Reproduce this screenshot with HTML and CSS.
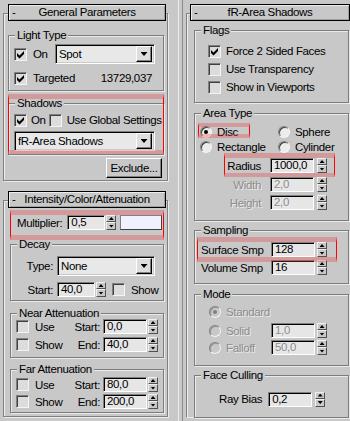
FILE: index.html
```html
<!DOCTYPE html>
<html>
<head>
<meta charset="utf-8">
<link rel="stylesheet" href="styles.css">
</head>
<body>
<div class="col col-left">
  <section class="rollout">
    <div class="roll-head"><span>-</span><span class="ttl">General Parameters</span><span></span></div>
    <div class="roll-body rb1">
      <fieldset class="grp g-light">
        <legend>Light Type</legend>
        <div class="gb gb-light">
          <div class="row r-on"><span class="chk on"><svg width="11" height="11" viewBox="0 0 11 11"><polygon points="2,4 4.5,6.5 9,2 9,5 4.5,9.5 2,7"/></svg></span><span class="lbl">On</span><div class="combo c-spot"><span class="t">Spot</span><span class="cbtn"></span></div></div>
          <div class="row r-tg"><span class="chk on"><svg width="11" height="11" viewBox="0 0 11 11"><polygon points="2,4 4.5,6.5 9,2 9,5 4.5,9.5 2,7"/></svg></span><span class="lbl">Targeted</span><span class="num">13729,037</span></div>
        </div>
      </fieldset>
      <fieldset class="grp g-sh">
        <legend>Shadows</legend>
        <div class="gb gb-sh">
          <div class="row r-sh"><span class="chk on"><svg width="11" height="11" viewBox="0 0 11 11"><polygon points="2,4 4.5,6.5 9,2 9,5 4.5,9.5 2,7"/></svg></span><span class="lbl-4">On</span><span class="chk chk-2"></span><span class="lbl-5">Use Global Settings</span></div>
          <div class="combo c-shadow"><span class="t">fR-Area Shadows</span><span class="cbtn"></span></div>
        </div>
      </fieldset>
      <div class="btn-row"><button class="btn">Exclude...</button></div>
    </div>
  </section>

  <section class="rollout r2">
    <div class="roll-head"><span>-</span><span class="ttl">Intensity/Color/Attenuation</span><span></span></div>
    <div class="roll-body rb2">
      <div class="row r-mult"><span>Multiplier:</span><span class="fld f-mult">0,5</span><span class="spin"><span></span><span></span></span><span class="swatch"></span></div>
      <fieldset class="grp g-decay">
        <legend>Decay</legend>
        <div class="gb gb-decay">
          <div class="row r-type"><span class="rl rl-42">Type:</span><div class="combo c-none"><span class="t">None</span><span class="cbtn"></span></div></div>
          <div class="row r-start"><span class="rl rl-42">Start:</span><span class="fld f-38">40,0</span><span class="spin"><span></span><span></span></span><span class="chk chk-6"></span><span class="lbl">Show</span></div>
        </div>
      </fieldset>
      <fieldset class="grp g-near">
        <legend>Near Attenuation</legend>
        <div class="gb gb-near">
          <div class="row r-att"><span class="chk"></span><span class="lbl w36">Use</span><span class="rl rl-29">Start:</span><span class="fld f-44 ml3">0,0</span><span class="spin"><span></span><span></span></span></div>
          <div class="row r-att r-att2"><span class="chk"></span><span class="lbl w36">Show</span><span class="rl rl-29">End:</span><span class="fld f-44 ml3">40,0</span><span class="spin"><span></span><span></span></span></div>
        </div>
      </fieldset>
      <fieldset class="grp g-far">
        <legend>Far Attenuation</legend>
        <div class="gb gb-far">
          <div class="row r-att"><span class="chk"></span><span class="lbl w36">Use</span><span class="rl rl-29">Start:</span><span class="fld f-44 ml3">80,0</span><span class="spin"><span></span><span></span></span></div>
          <div class="row r-att r-att3"><span class="chk"></span><span class="lbl w36">Show</span><span class="rl rl-29">End:</span><span class="fld f-44 ml3">200,0</span><span class="spin"><span></span><span></span></span></div>
        </div>
      </fieldset>
    </div>
  </section>

  <div class="hl hl-shadows"></div>
  <div class="hl hl-mult"></div>
</div>

<div class="divider"></div>

<div class="col col-right">
  <section class="rollout">
    <div class="roll-head"><span>-</span><span class="ttl">fR-Area Shadows</span><span></span></div>
    <div class="roll-body rbR">
      <fieldset class="grp g-flags">
        <legend>Flags</legend>
        <div class="gb gb-flags">
          <div class="row r-flag"><span class="chk on"><svg width="11" height="11" viewBox="0 0 11 11"><polygon points="2,4 4.5,6.5 9,2 9,5 4.5,9.5 2,7"/></svg></span><span class="lbl-5">Force 2 Sided Faces</span></div>
          <div class="row r-flag"><span class="chk"></span><span class="lbl-5">Use Transparency</span></div>
          <div class="row r-flag"><span class="chk"></span><span class="lbl-5">Show in Viewports</span></div>
        </div>
      </fieldset>
      <fieldset class="grp g-area">
        <legend>Area Type</legend>
        <div class="gb gb-area">
          <div class="radios">
            <div class="row r-rad"><span class="rad on"></span><span class="lbl-5">Disc</span></div>
            <div class="row r-rad"><span class="rad"></span><span class="lbl-5">Sphere</span></div>
            <div class="row r-rad"><span class="rad"></span><span class="lbl-5">Rectangle</span></div>
            <div class="row r-rad"><span class="rad"></span><span class="lbl-5">Cylinder</span></div>
          </div>
          <div class="row r-par r-radius"><span class="rl rl-61">Radius</span><span class="fld f-44 ml9">1000,0</span><span class="spin ml3"><span></span><span></span></span></div>
          <div class="row r-par r-width"><span class="rl rl-61 dis-t">Width</span><span class="fld f-44 ml9 dis-t">2,0</span><span class="spin ml3"><span></span><span></span></span></div>
          <div class="row r-par r-height"><span class="rl rl-61 dis-t">Height</span><span class="fld f-44 ml9 dis-t">2,0</span><span class="spin ml3"><span></span><span></span></span></div>
        </div>
      </fieldset>
      <fieldset class="grp g-samp">
        <legend>Sampling</legend>
        <div class="gb gb-samp">
          <div class="row r-par"><span class="ll w70">Surface Smp</span><span class="fld f-44">128</span><span class="spin ml2"><span></span><span></span></span></div>
          <div class="row r-par r-vol"><span class="ll w70">Volume Smp</span><span class="fld f-44">16</span><span class="spin ml2"><span></span><span></span></span></div>
        </div>
      </fieldset>
      <fieldset class="grp g-mode">
        <legend>Mode</legend>
        <div class="gb gb-mode">
          <div class="row r-std"><span class="rad dis on"></span><span class="lbl-5 dis-t">Standard</span></div>
          <div class="row r-par r-solid"><span class="rad dis"></span><span class="lbl-5 dis-t w45">Solid</span><span class="fld f-44 dis-t">1,0</span><span class="spin ml2"><span></span><span></span></span></div>
          <div class="row r-par r-fall"><span class="rad dis"></span><span class="lbl-5 dis-t w45">Falloff</span><span class="fld f-44 dis-t">50,0</span><span class="spin ml2"><span></span><span></span></span></div>
        </div>
      </fieldset>
      <fieldset class="grp g-face">
        <legend>Face Culling</legend>
        <div class="gb gb-face">
          <div class="row r-bias"><span>Ray Bias</span><span class="fld f-44 ml6">0,2</span><span class="spin ml3"><span></span><span></span></span></div>
        </div>
      </fieldset>
    </div>
  </section>

  <div class="hl hl-disc"></div>
  <div class="hl hl-radius"></div>
  <div class="hl hl-surf"></div>
</div>
</body>
</html>
```

FILE: styles.css
```css
* { box-sizing: border-box; }
html, body { margin: 0; padding: 0; }
body {
  width: 350px;
  height: 421px;
  overflow: hidden;
  background: #c8c8c8;
  font-family: "Liberation Sans", Arial, sans-serif;
  font-size: 11.5px;
  letter-spacing: -0.35px;
  color: #000;
  display: flex;
  align-items: flex-start;
}
.col { position: relative; height: 421px; flex: none; overflow: hidden; }
.col-left { width: 172px; padding-top: 4px; }
.col-right { width: 164px; padding-top: 4px; }
.divider {
  flex: none;
  width: 5px;
  height: 421px;
  margin-left: 6px;
  margin-right: 3px;
  border-left: 1px solid #ececec;
  border-right: 1px solid #8a8a8a;
}

/* rollouts */
.rollout { margin-left: 3px; width: 165px; }
.col-right .rollout { margin-left: 0; width: 172px; }
.r2 { margin-top: 10px; }
.roll-head {
  position: relative;
  z-index: 1;
  height: 17px;
  margin: 0 2px 0 5px;
  border: 1px solid #000;
  box-shadow: inset 1px 1px 0 #ececec, inset -1px -1px 0 #a0a0a0;
  background: #c8c8c8;
  display: grid;
  grid-template-columns: 12px 1fr 12px;
  align-items: center;
  line-height: 13px;
  white-space: nowrap;
}
.roll-head > span:first-child { padding-left: 3px; }
.col-right .roll-head { margin: 0 8px 0 4px; }
.ttl { text-align: center; }
.roll-body {
  margin-top: -8px;
  border: 1px solid #808080;
  box-shadow: inset 1px 1px 0 #ececec, 1px 1px 0 #ececec;
}
.rb1 { padding: 15px 0 2px 0; }
.rb2 { padding: 14px 0 3px 0; }
.rbR { padding: 10px 0 0 0; height: 404px; border-right: none; border-bottom: none; }

/* group boxes */
.grp {
  margin: 0 0 0 4px;
  width: 156px;
  padding: 0;
  min-width: 0;
  border: 1px solid #7c7c7c;
  box-shadow: inset 1px 1px 0 #eaeaea, 1px 1px 0 #eaeaea;
}
.grp legend {
  padding: 0 2px;
  margin-left: 6px;
  line-height: 12px;
  height: 12px;
  background: #c8c8c8;
  white-space: nowrap;
}
.g-sh { margin-top: 6px; }
.g-decay, .g-near, .g-far { margin-left: 6px; width: 154px; }
.g-decay { margin-top: 8px; }
.g-near { margin-top: 6px; }
.g-far { margin-top: 5px; }
.col-right .grp { margin-left: 7px; width: 155px; }
.col-right .g-area { margin-top: 4px; }
.col-right .g-samp { margin-top: 3px; }
.col-right .g-mode { margin-top: 4px; }
.col-right .g-face { margin-top: 3px; }

.gb-light { padding: 3px 8px 2px 5px; }
.gb-sh { padding: 3px 8px 3px 5px; }
.gb-decay { padding: 6px 0 3px 0; }
.gb-near { padding: 0 0 5px 5px; }
.gb-far { padding: 2px 0 3px 5px; }
.gb-flags { padding: 6px 0 6px 13px; }
.gb-area { padding: 5px 0 10px 5px; }
.gb-samp { padding: 6px 0 8px 6px; }
.gb-mode { padding: 5px 0 10px 14px; }
.gb-face { padding: 10px 0 10px 24px; }

/* rows */
.row { display: flex; align-items: center; white-space: nowrap; }
.r-on { height: 20px; }
.r-tg { height: 20px; margin-top: 4px; }
.r-sh { height: 16px; }
.r-mult { height: 15px; padding-left: 13px; }
.r-type { height: 20px; }
.r-start { height: 15px; margin-top: 6px; }
.r-att { height: 15px; }
.r-att2 { margin-top: 3px; }
.r-att3 { margin-top: 2px; }
.r-flag { height: 18px; }
.radios { display: grid; grid-template-columns: 78px 1fr; }
.r-rad { height: 15px; }
.r-par { height: 15px; }
.r-radius { margin-top: 4px; }
.r-width { margin-top: 4px; }
.r-height { margin-top: 3px; }
.r-vol { margin-top: 3px; }
.r-std { height: 14px; }
.r-solid { margin-top: 4px; }
.r-fall { margin-top: 2px; }
.r-bias { height: 16px; }

.lbl { margin-left: 6px; }
.lbl-4 { margin-left: 4px; }
.lbl-5 { margin-left: 5px; }
.chk-2 { margin-left: 3px; }
.chk-6 { margin-left: 6px; }
.w36 { width: 36px; flex: none; }
.w45 { width: 45px; flex: none; }
.w70 { width: 70px; flex: none; }
.rl { text-align: right; flex: none; }
.rl-42 { width: 42px; }
.rl-29 { width: 29px; }
.rl-61 { width: 61px; }
.ml2 { margin-left: 2px; }
.ml3 { margin-left: 3px; }
.ml6 { margin-left: 6px; }
.ml9 { margin-left: 9px; }
.num { margin-left: auto; margin-right: 3px; }

.dis-t { color: #8c8c8c; text-shadow: 1px 1px 0 #ececec; }

/* checkbox */
.chk {
  flex: none;
  width: 13px;
  height: 13px;
  background: #dcdcdc;
  border: 1px solid;
  border-color: #808080 #f4f4f4 #f4f4f4 #808080;
  box-shadow: inset 1px 1px 0 #404040;
  display: block;
}
.chk svg { display: block; fill: #000; }

/* radio */
.rad {
  flex: none;
  position: relative;
  width: 12px;
  height: 12px;
  border-radius: 50%;
  background: #ececec;
  border: 1px solid;
  border-color: #808080 #f4f4f4 #f4f4f4 #808080;
  box-shadow: inset 1px 1px 0 #404040;
}
.rad.on::after {
  content: "";
  position: absolute;
  left: 3px;
  top: 3px;
  width: 4px;
  height: 4px;
  border-radius: 50%;
  background: #000;
}
.rad.dis { background: #c8c8c8; box-shadow: inset 1px 1px 0 #9a9a9a; }
.rad.dis.on::after { background: #808080; }

/* text field */
.fld {
  flex: none;
  height: 15px;
  background: #e6e6e6;
  border: 1px solid;
  border-color: #808080 #fff #fff #808080;
  box-shadow: inset 1px 1px 0 #000;
  padding-left: 3px;
  line-height: 13px;
  display: block;
}
.f-mult { width: 38px; margin-left: 5px; }
.f-38 { width: 38px; margin-left: 4px; }
.f-44 { width: 44px; }

/* spinner */
.spin {
  flex: none;
  width: 10px;
  height: 15px;
  margin-left: 1px;
  display: flex;
  flex-direction: column;
}
.spin > span {
  height: 7px;
  border: 1px solid;
  border-color: #f0f0f0 #505050 #505050 #f0f0f0;
  background: #c8c8c8;
  display: flex;
  align-items: center;
  justify-content: center;
}
.spin > span + span { height: 8px; }
.spin > span::before {
  content: "";
  width: 5px;
  height: 3px;
  background: #000;
  clip-path: polygon(50% 0, 100% 100%, 0 100%);
}
.spin > span + span::before { clip-path: polygon(0 0, 100% 0, 50% 100%); }
.spin.ml2 { margin-left: 2px; }
.spin.ml3 { margin-left: 3px; }

/* combo */
.combo {
  height: 20px;
  display: flex;
  align-items: center;
  background: #e8e8e8;
  border: 1px solid;
  border-color: #808080 #fff #fff #808080;
  box-shadow: inset 1px 1px 0 #000, inset -1px -1px 0 #c8c8c8;
  padding: 0 2px 0 3px;
  white-space: nowrap;
}
.combo .t { flex: 1; }
.c-spot { margin-left: auto; width: 100px; }
.c-shadow { width: 141px; margin-top: 3px; }
.c-none { width: 98px; margin-left: 4px; }
.cbtn {
  flex: none;
  width: 16px;
  height: 16px;
  background: #dedede;
  border: 1px solid;
  border-color: #fff #000 #000 #fff;
  box-shadow: inset -1px -1px 0 #808080;
  display: flex;
  align-items: center;
  justify-content: center;
}
.cbtn::before {
  content: "";
  width: 7px;
  height: 4px;
  background: #000;
  clip-path: polygon(0 0, 100% 0, 50% 100%);
}

.swatch {
  flex: none;
  width: 42px;
  height: 15px;
  margin-left: 4px;
  background: #f0f0ff;
  border: 1px solid;
  border-color: #808080 #404040 #404040 #808080;
}

/* button */
.btn-row { display: flex; justify-content: flex-end; margin-top: 3px; padding-right: 5px; }
.btn {
  width: 56px;
  height: 20px;
  padding: 0;
  background: #c8c8c8;
  border: 1px solid;
  border-color: #fff #000 #000 #fff;
  box-shadow: inset -1px -1px 0 #808080;
  font: inherit;
  letter-spacing: inherit;
  color: #000;
}

/* red annotation highlights drawn over the screenshot */
.hl {
  position: absolute;
  pointer-events: none;
  border-style: solid;
  border-color: rgba(235, 50, 50, 0.3) #ff0000;
  border-left-width: 1px;
  border-right-width: 1px;
}
.hl-shadows { left: 8px; top: 94px; width: 156px; height: 60px; border-top-width: 5px; border-bottom-width: 4px; }
.hl-mult { left: 10px; top: 210px; width: 154px; height: 30px; border-top-width: 5px; border-bottom-width: 5px; }
.hl-disc { left: 12px; top: 123px; width: 52px; height: 15px; border-top-width: 4px; border-bottom-width: 4px; }
.hl-radius { left: 38px; top: 153px; width: 111px; height: 24px; border-top-width: 5px; border-bottom-width: 4px; }
.hl-surf { left: 11px; top: 237px; width: 140px; height: 25px; border-top-width: 5px; border-bottom-width: 5px; }
```
